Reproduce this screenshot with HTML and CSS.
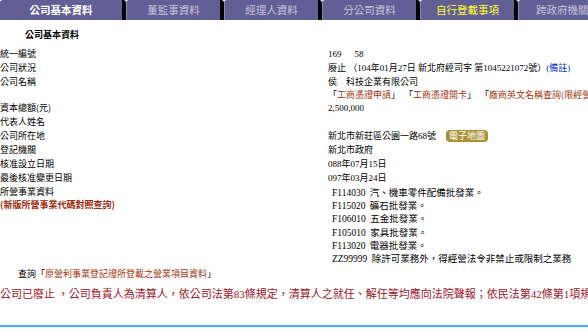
FILE: index.html
```html
<!DOCTYPE html>
<html lang="zh-Hant">
<head>
  <meta charset="UTF-8" />
  <title>公司基本資料</title>
  <link rel="stylesheet" href="styles.css">
</head>
<body>

<div class="tabs">
  <div class="tab first active">公司基本資料</div>
  <div class="tab">董監事資料</div>
  <div class="tab">經理人資料</div>
  <div class="tab">分公司資料</div>
  <div class="tab notice">自行登載事項</div>
  <div class="tab last">跨政府機關資料</div>
</div>

<h3 class="title">公司基本資料</h3>

<div class="info">
  <div class="row">
    <div class="label">統一編號</div>
    <div class="value">169<span class="gap"></span>58</div>
  </div>
  <div class="row">
    <div class="label">公司狀況</div>
    <div class="value">廢止 （104年01月27日 新北府經司字 第1045221072號）<a class="note">(備註)</a></div>
  </div>
  <div class="row">
    <div class="label">公司名稱</div>
    <div class="value">
      <div>侯　科技企業有限公司</div>
      <div class="links"><span class="grp">「<a>工商憑證申請</a>」</span><span class="grp">「<a>工商憑證開卡</a>」</span><span class="grp">「<a>廠商英文名稱查詢(限經營出進口或買賣業務者)</a>」</span></div>
    </div>
  </div>
  <div class="row">
    <div class="label">資本總額(元)</div>
    <div class="value">2,500,000</div>
  </div>
  <div class="row">
    <div class="label">代表人姓名</div>
    <div class="value"></div>
  </div>
  <div class="row">
    <div class="label">公司所在地</div>
    <div class="value">新北市新莊區公園一路68號<span class="map-btn">電子地圖</span></div>
  </div>
  <div class="row">
    <div class="label">登記機關</div>
    <div class="value">新北市政府</div>
  </div>
  <div class="row">
    <div class="label">核准設立日期</div>
    <div class="value">088年07月15日</div>
  </div>
  <div class="row">
    <div class="label">最後核准變更日期</div>
    <div class="value">097年03月24日</div>
  </div>
  <div class="row">
    <div class="label">
      <div>所營事業資料</div>
      <a class="code-link">(新版所營事業代碼對照查詢)</a>
    </div>
    <div class="value">
      <ul class="biz">
        <li><span class="code">F114030</span> 汽、機車零件配備批發業。</li>
        <li><span class="code">F115020</span> 礦石批發業。</li>
        <li><span class="code">F106010</span> 五金批發業。</li>
        <li><span class="code">F105010</span> 家具批發業。</li>
        <li><span class="code">F113020</span> 電器批發業。</li>
        <li><span class="code">ZZ99999</span> 除許可業務外，得經營法令非禁止或限制之業務</li>
      </ul>
    </div>
  </div>
</div>

<p class="query">查詢「<a>原營利事業登記證所登載之營業項目資料</a>」</p>

<p class="warning">公司已廢止 ，公司負責人為清算人，依公司法第83條規定，清算人之就任、解任等均應向法院聲報；依民法第42條第1項規定，清算人應向法院聲報清算終結。</p>

<div class="footer-line"></div>

</body>
</html>
```

FILE: styles.css
```css
* {
  box-sizing: border-box;
}
body {
  margin: 0;
  width: 588px;
  overflow: hidden;
  white-space: nowrap;
  font-family: "Liberation Serif", "Noto Sans CJK TC", serif;
  font-size: 9px;
  color: #000;
  background: #fff;
  text-spacing-trim: space-all;
}
a {
  color: #a3330c;
}

/* Tabs */
.tabs {
  display: flex;
  height: 20px;
}
.tab {
  flex: 0 0 98px;
  height: 20px;
  line-height: 20px;
  text-align: center;
  font-size: 10.5px;
  font-family: "Noto Sans CJK TC", sans-serif;
  color: #c4c3da;
  background: #625f96;
  border-left: 1px solid #8886b6;
  border-right: 4px solid #000;
  border-radius: 3px 3px 0 0;
}
.tab.first {
  flex-basis: 126px;
  border-left: none;
}
.tab.active {
  color: #fff;
  font-weight: bold;
}
.tab.notice {
  color: #ffff2e;
}
.tab.last {
  flex-basis: 98px;
  text-align: left;
  padding-left: 17px;
  border-right: none;
}

.title {
  margin: 8px 0 0 25px;
  font-size: 9px;
  line-height: 14px;
  font-weight: bold;
  font-family: "Noto Sans CJK TC", sans-serif;
}

/* Info table */
.info {
  margin-top: 5px;
}
.row {
  display: grid;
  grid-template-columns: 328px 1fr;
  line-height: 14px;
}
.label {
  font-family: "Noto Sans CJK TC", sans-serif;
}
.gap {
  display: inline-block;
  width: 13px;
}
.note {
  color: #0033cc;
}
.links {
  display: flex;
  line-height: 12px;
}
.links .grp {
  flex: 0 0 auto;
  margin-right: 4px;
  font-family: "Noto Sans CJK TC", sans-serif;
}
.map-btn {
  display: inline-block;
  margin-left: 10px;
  padding: 0 3px;
  height: 12px;
  line-height: 12px;
  color: #fff;
  background: #aa9236;
  border-radius: 4px;
  font-family: "Noto Sans CJK TC", sans-serif;
}
.code-link {
  display: block;
  color: #9e2a10;
  font-weight: bold;
  line-height: 12px;
}
.biz {
  list-style: none;
  margin: 0;
  padding: 2px 0 0 4px;
  font-size: 9.5px;
}
.biz li {
  line-height: 13.2px;
}
.code {
  margin-right: 2px;
}

.query {
  margin: 1px 0 0 18px;
  line-height: 14px;
  font-family: "Noto Sans CJK TC", sans-serif;
}
.warning {
  margin: 5px 0 0;
  line-height: 16px;
  font-size: 11px;
  color: #a01428;
}
.footer-line {
  margin-top: 23px;
  height: 2px;
  background: #4aaeff;
}
```
